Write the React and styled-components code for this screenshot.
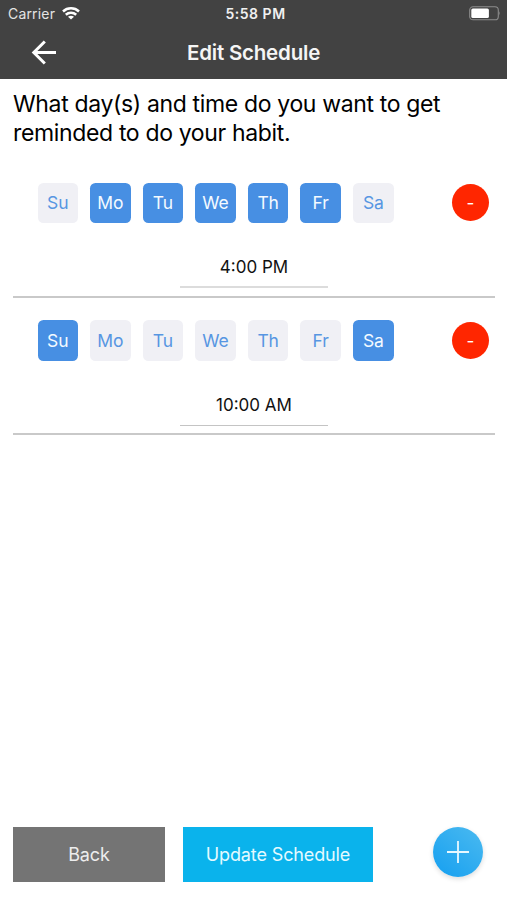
import React from 'react';
import styled, { createGlobalStyle } from 'styled-components';

const GlobalStyle = createGlobalStyle`
  * { box-sizing: border-box; }
  body { margin: 0; background: #fff; font-family: Inter, "Liberation Sans", sans-serif; }
  button { font: inherit; border: 0; padding: 0; }
`;

const Screen = styled.div`
  width: 507px;
  height: 900px;
  display: flex;
  flex-direction: column;
  overflow: hidden;
  background: #fff;
  color: #111;
`;

const Header = styled.header`
  height: 79px;
  flex: none;
  background: #424242;
  color: #fff;
`;

const StatusBar = styled.div`
  height: 27px;
  padding: 0 6px 0 8px;
  display: grid;
  grid-template-columns: 1fr auto 1fr;
  align-items: center;
`;

const Carrier = styled.div`
  display: flex;
  align-items: center;
  gap: 7px;
  font-size: 14px;
  letter-spacing: 0.18px;
  color: #e4e4e4;
`;

const Clock = styled.div`
  padding-left: 2px;
  font-size: 14px;
  font-weight: 600;
  letter-spacing: 0.52px;
  color: #f0f0f0;
`;

const Battery = styled.svg`
  justify-self: end;
  display: block;
`;

const NavBar = styled.div`
  height: 51px;
  padding: 0 31px;
  display: grid;
  grid-template-columns: 1fr auto 1fr;
  align-items: center;
`;

const BackArrow = styled.button`
  width: 26px;
  height: 26px;
  background: none;
  color: #fff;
  svg { display: block; }
`;

const Title = styled.h1`
  margin: 0;
  font-size: 20.5px;
  font-weight: 600;
  letter-spacing: -0.2px;
  color: #f5f5f5;
`;

const Main = styled.main`
  flex: 1;
  padding: 11px 12px 0 13px;
`;

const Prompt = styled.p`
  margin: 0;
  height: 71px;
  font-size: 23px;
  line-height: 29px;
  letter-spacing: -0.35px;
  color: #000;
  white-space: nowrap;
`;

const Reminder = styled.section`
  height: 137.75px;
  padding-top: 21.5px;
`;

const DayRow = styled.div`
  display: flex;
  align-items: center;
  gap: 12.1px;
  padding: 0 6px 0 24.5px;
`;

const Day = styled.button`
  width: 40.5px;
  height: 40.5px;
  border-radius: 5.5px;
  background: ${({ $on }) => ($on ? '#478fe3' : '#f0f0f5')};
  color: ${({ $on }) => ($on ? '#f4faff' : '#5796e2')};
  font-size: 17.5px;
  letter-spacing: -0.1px;
  text-align: center;
`;

const Remove = styled.button`
  width: 37px;
  height: 37px;
  margin-left: auto;
  border-radius: 50%;
  background: #ff2600;
  color: #fff;
  font-size: 17px;
`;

const Time = styled.div`
  width: 148px;
  height: 42px;
  margin: 23px 0 0 167px;
  border-bottom: ${({ $rule }) => $rule};
  font-size: 17px;
  line-height: 42px;
  text-align: center;
  color: #111;
`;

const Divider = styled.div`
  height: 2px;
  margin-top: 7.5px;
  background: #c9c9c9;
`;

const Footer = styled.footer`
  height: 73.5px;
  flex: none;
  display: flex;
  align-items: flex-start;
  padding: 0 24px 0 13px;
`;

const Action = styled.button`
  width: ${({ $width }) => $width}px;
  height: 55px;
  margin-right: 18px;
  padding-top: 1px;
  background: ${({ $primary }) => ($primary ? '#0ab3ec' : '#747474')};
  color: ${({ $primary }) => ($primary ? '#e4faff' : '#ededed')};
  font-size: 18px;
  letter-spacing: -0.12px;
`;

const AddButton = styled.button`
  width: 50px;
  height: 50px;
  margin-left: auto;
  display: grid;
  place-items: center;
  border-radius: 50%;
  background: linear-gradient(40deg, #159ff0, #4bbaf0);
  box-shadow: 0 2px 5px rgba(0, 0, 0, 0.14);
`;

const days = ['Su', 'Mo', 'Tu', 'We', 'Th', 'Fr', 'Sa'];
const reminders = [
  { time: '4:00 PM', active: ['Mo', 'Tu', 'We', 'Th', 'Fr'], rule: '2px solid #dcdcdc' },
  { time: '10:00 AM', active: ['Su', 'Sa'], rule: '1px solid #c4c4c4' },
];

export default function App() {
  return (
    <Screen>
      <GlobalStyle />
      <Header>
        <StatusBar>
          <Carrier>
            Carrier
            <svg width="18" height="13" viewBox="0 0 18 13" fill="none" stroke="#fff" strokeWidth="2.5">
              <path d="M1 4.5C5.5 .3 12.5 .3 17 4.5" />
              <path d="M3.8 7.7C6.8 5 11.2 5 14.2 7.7" />
              <path d="M9 12.6 6 9.8Q9 7.5 12 9.8Z" fill="#fff" stroke="none" />
            </svg>
          </Carrier>
          <Clock>5:58 PM</Clock>
          <Battery width="32" height="15" viewBox="0 0 32 15">
            <rect x=".7" y=".8" width="28.6" height="13" rx="3.4" fill="none" stroke="#8d8d8d" strokeWidth="1.1" />
            <rect x="2.3" y="2.5" width="17.6" height="9.6" rx="1.6" fill="#fff" />
            <path d="M30.4 5.2q1.6 2.1 0 4.2z" fill="#8d8d8d" />
          </Battery>
        </StatusBar>
        <NavBar>
          <BackArrow aria-label="Go back">
            <svg width="26" height="26" viewBox="0 0 26 26" fill="none" stroke="#fff" strokeWidth="3">
              <path d="M25 12.5H3M13.8 1.5 2.8 12.5l11 11" />
            </svg>
          </BackArrow>
          <Title>Edit Schedule</Title>
        </NavBar>
      </Header>
      <Main>
        <Prompt>
          What day(s) and time do you want to get
          <br />
          reminded to do your habit.
        </Prompt>
        {reminders.map(({ time, active, rule }) => (
          <Reminder key={time}>
            <DayRow>
              {days.map((day) => (
                <Day key={day} $on={active.includes(day)}>{day}</Day>
              ))}
              <Remove aria-label="Remove reminder">-</Remove>
            </DayRow>
            <Time $rule={rule}>{time}</Time>
            <Divider />
          </Reminder>
        ))}
      </Main>
      <Footer>
        <Action $width={152}>Back</Action>
        <Action $width={190} $primary>Update Schedule</Action>
        <AddButton aria-label="Add reminder">
          <svg width="22" height="22" viewBox="0 0 22 22" stroke="#e8f8ff" strokeWidth="1.8">
            <path d="M11 0v22M0 11h22" />
          </svg>
        </AddButton>
      </Footer>
    </Screen>
  );
}
